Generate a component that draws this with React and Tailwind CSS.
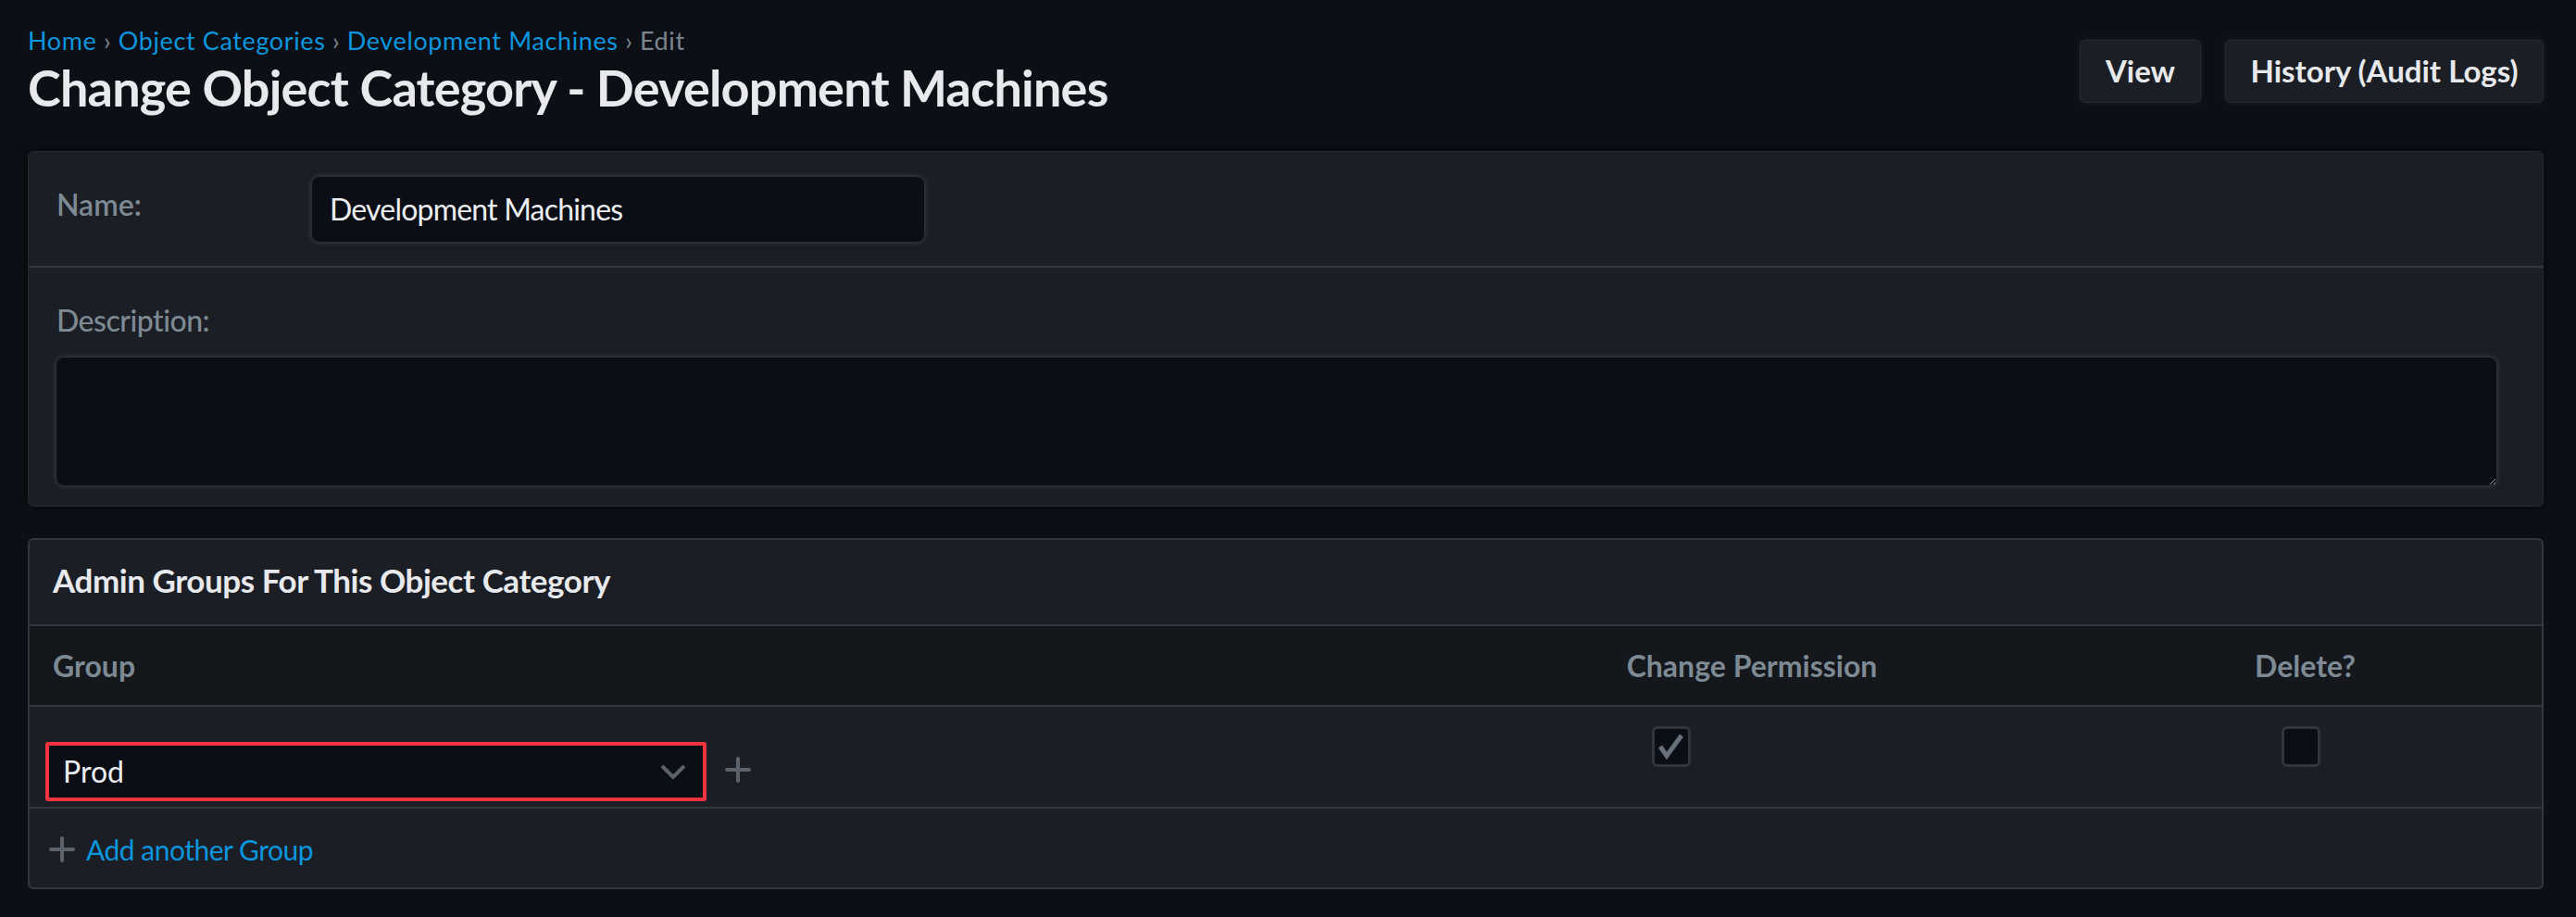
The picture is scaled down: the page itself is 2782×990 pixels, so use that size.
import React from 'react';

const head = "font-['Lato',sans-serif]";
const body = "font-['Lato',sans-serif]";

const PlusIcon = ({ className }) => (
    <svg viewBox="0 0 28 28" className={className} fill="none" stroke="currentColor" strokeWidth="4" strokeLinecap="round">
        <path d="M14 2v24M2 14h24" />
    </svg>
);

const Checkbox = ({ checked }) => (
    <div className="w-[42px] h-[44px] rounded-[6px] border-[3px] border-[#32353b] bg-[#0b0e14] flex items-center justify-center">
        {checked && (
            <svg viewBox="0 0 30 30" className="w-[30px] h-[30px] text-[#66707a]" fill="none" stroke="currentColor" strokeWidth="5" strokeLinejoin="miter">
                <path d="M3 15l7 10L26 3" />
            </svg>
        )}
    </div>
);

const App = () => {
    return (
        <div className={`min-h-screen w-full bg-[#0c0f15] pl-[30px] pr-[35px] ${body}`}>
            {/* page header */}
            <header className="flex justify-between items-start h-[163px]">
                <div className="pt-[28px]">
                    <nav className="text-[27px] leading-[32px] text-[#0b96df] tracking-[0.62px]">
                        <span>Home</span>
                        <span className="text-[#7b858e]"> › </span>
                        <span>Object Categories</span>
                        <span className="text-[#7b858e]"> › </span>
                        <span>Development Machines</span>
                        <span className="text-[#7b858e]"> › Edit</span>
                    </nav>
                    <h1 className={`${head} mt-[5px] text-[54px] leading-[60px] font-bold text-[#e8e9ed] tracking-[-0.8px]`}>
                        Change Object Category - Development Machines
                    </h1>
                </div>
                <div className="flex gap-[26px] pt-[43px]">
                    <button className={`${head} h-[68px] w-[131px] rounded-[6px] bg-[#1b1e24] border border-[#272a30] shadow-[0_0_6px_rgba(255,255,255,0.08)] text-[33px] font-bold text-[#e8e9ed]`}>
                        View
                    </button>
                    <button className={`${head} h-[68px] w-[344px] rounded-[6px] bg-[#1b1e24] border border-[#272a30] shadow-[0_0_6px_rgba(255,255,255,0.08)] text-[33px] font-bold text-[#e8e9ed]`}>
                        History (Audit Logs)
                    </button>
                </div>
            </header>

            {/* main fields */}
            <section className="h-[384px] rounded-[6px] bg-[#1b1e24] border border-[#25282e] shadow-[0_0_12px_rgba(0,0,0,0.7)]">
                <div className="h-[125px] flex items-center pl-[30px] border-b-2 border-[#34373c]">
                    <label className="w-[276px] text-[32px] leading-[40px] font-semibold text-[#7d8a94] -mt-[10px]">Name:</label>
                    <div className="w-[661px] h-[70px] rounded-[8px] bg-[#0b0e14] shadow-[0_0_6px_rgba(255,255,255,0.18)] flex items-center pl-[19px] text-[32px] text-[#eceef2] tracking-[-0.8px]">
                        Development Machines
                    </div>
                </div>
                <div className="pl-[30px] pt-[41px]">
                    <label className="block text-[32px] leading-[32px] font-medium text-[#7d8a94] tracking-[-0.5px]">Description:</label>
                    <textarea className="mt-[24px] w-[2635px] h-[138px] rounded-[8px] bg-[#0b0e14] shadow-[0_0_6px_rgba(255,255,255,0.18)] outline-none [color-scheme:dark] block" />
                </div>
            </section>

            {/* inline groups */}
            <section className="mt-[34px] h-[379px] rounded-[6px] bg-[#1b1e24] border-2 border-[#34373c] overflow-hidden">
                <div className="h-[93px] flex items-center pl-[25px] border-b-2 border-[#34373c]">
                    <h2 className={`${head} text-[35px] font-bold text-[#e8e9ed] tracking-[-0.45px] -mt-[4px]`}>
                        Admin Groups For This Object Category
                    </h2>
                </div>
                <div className={`${head} h-[87px] grid grid-cols-[1518px_684px_1fr] items-center bg-[#14171c] border-b-2 border-[#34373c] text-[32px] font-bold text-[#7d8a94]`}>
                    <div className="pl-[25px]">Group</div>
                    <div className="text-center">Change Permission</div>
                    <div className="text-center">Delete?</div>
                </div>
                <div className="h-[110px] grid grid-cols-[1518px_684px_1fr] items-start border-b-2 border-[#34373c]">
                    <div className="flex items-center pl-[17px] pt-[38px] gap-[20px]">
                        <div className="w-[714px] h-[64px] border-[4px] border-[#f5333f] rounded-[3px] bg-[#0b0e14] flex items-center justify-between pl-[15px] pr-[18px]">
                            <span className="text-[32px] text-[#eceef2]">Prod</span>
                            <svg viewBox="0 0 28 17" className="w-[28px] h-[17px] text-[#5b626b]" fill="none" stroke="currentColor" strokeWidth="4">
                                <path d="M2 2l12 12L26 2" />
                            </svg>
                        </div>
                        <PlusIcon className="w-[28px] h-[28px] text-[#5b626b] -mt-[4px]" />
                    </div>
                    <div className="pl-[234px] pt-[21px]">
                        <Checkbox checked />
                    </div>
                    <div className="pl-[230px] pt-[21px]">
                        <Checkbox />
                    </div>
                </div>
                <div className="h-[85px] flex items-center pl-[21px] gap-[12px] pt-[3px]">
                    <PlusIcon className="w-[28px] h-[28px] text-[#5b626b]" />
                    <span className="text-[30px] text-[#0b96df] tracking-[-0.5px]">Add another Group</span>
                </div>
            </section>
        </div>
    );
};

export default App;
